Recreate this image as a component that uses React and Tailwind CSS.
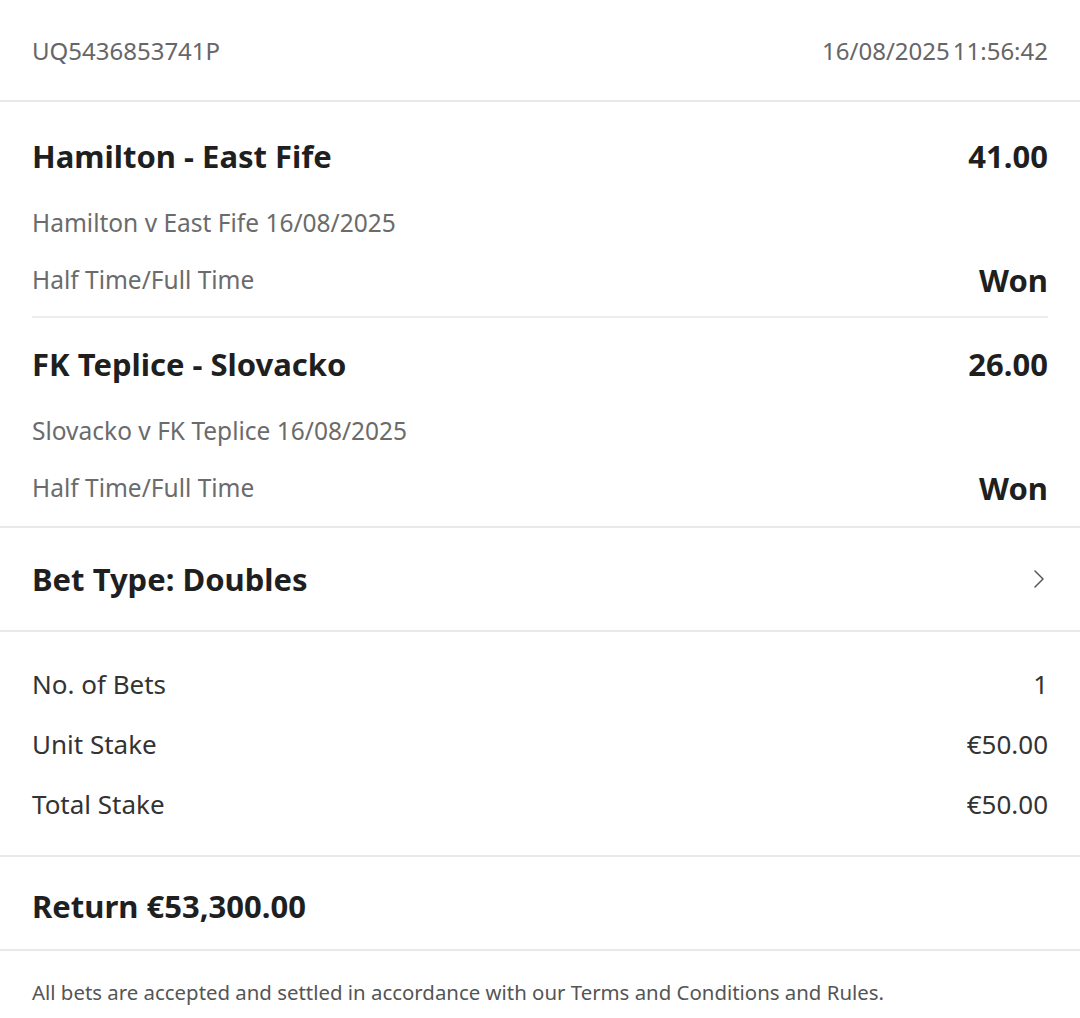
import React from 'react';

const selections = [
  { title: 'Hamilton - East Fife', odds: '41.00', event: 'Hamilton v East Fife 16/08/2025', market: 'Half Time/Full Time', result: 'Won' },
  { title: 'FK Teplice - Slovacko', odds: '26.00', event: 'Slovacko v FK Teplice 16/08/2025', market: 'Half Time/Full Time', result: 'Won' },
];

const stakeRows = [
  { label: 'No. of Bets', value: '1' },
  { label: 'Unit Stake', value: '€50.00' },
  { label: 'Total Stake', value: '€50.00' },
];

const Selection = ({ sel, last }) => (
  <div className={`mx-8 h-[208px] ${last ? '' : 'border-b-2 border-[#ececec]'}`}>
    <div className="flex items-center justify-between h-[92px]">
      <span className="text-[31px] font-bold text-[#1f1f1f]">{sel.title}</span>
      <span className="text-[31px] font-bold text-[#1f1f1f]">{sel.odds}</span>
    </div>
    <div className="flex items-center h-[42px] text-[24.5px] text-[#6b6b6b]">{sel.event}</div>
    <div className="flex items-center justify-between h-[72px]">
      <span className="text-[24.5px] text-[#6b6b6b]">{sel.market}</span>
      <span className="text-[31px] font-bold text-[#1f1f1f]">{sel.result}</span>
    </div>
  </div>
);

export default function App() {
  return (
    <div className="w-[1080px] h-[1018px] bg-white overflow-hidden" style={{ fontFamily: '"Noto Sans", "Open Sans", sans-serif' }}>
      {/* Header */}
      <div className="flex items-center justify-between h-[102px] pt-[2px] px-8 border-b-2 border-[#e9e9e9] text-[24px] text-[#666]">
        <span>UQ5436853741P</span>
        <span className="flex gap-[3px]">
          <span>16/08/2025</span>
          <span>11:56:42</span>
        </span>
      </div>

      {/* Selections */}
      <div className="pt-[8px] border-b-2 border-[#e9e9e9]">
        {selections.map((sel, i) => (
          <Selection key={i} sel={sel} last={i === selections.length - 1} />
        ))}
      </div>

      {/* Bet type */}
      <div className="flex items-center justify-between h-[104px] px-8 border-b-2 border-[#e9e9e9]">
        <span className="text-[31px] font-bold text-[#1f1f1f]">Bet Type: Doubles</span>
        <svg width="14" height="22" viewBox="0 0 14 22" fill="none" className="mr-[2px]">
          <path d="M3 3l8 8-8 8" stroke="#555" strokeWidth="1.5" strokeLinecap="round" strokeLinejoin="round" />
        </svg>
      </div>

      {/* Stakes */}
      <div className="flex flex-col h-[225px] pt-[22px] px-8 border-b-2 border-[#e9e9e9]">
        {stakeRows.map((row) => (
          <div key={row.label} className="flex items-center justify-between h-[60px] text-[26px] text-[#333]">
            <span>{row.label}</span>
            <span>{row.value}</span>
          </div>
        ))}
      </div>

      {/* Return */}
      <div className="flex items-center h-[94px] pt-[6px] px-8 border-b-2 border-[#e9e9e9]">
        <span className="text-[31px] font-bold text-[#1f1f1f]">Return €53,300.00</span>
      </div>

      {/* Footer */}
      <div className="px-8 pt-[26px] text-[20.4px] text-[#555]">
        All bets are accepted and settled in accordance with our Terms and Conditions and Rules.
      </div>
    </div>
  );
}
